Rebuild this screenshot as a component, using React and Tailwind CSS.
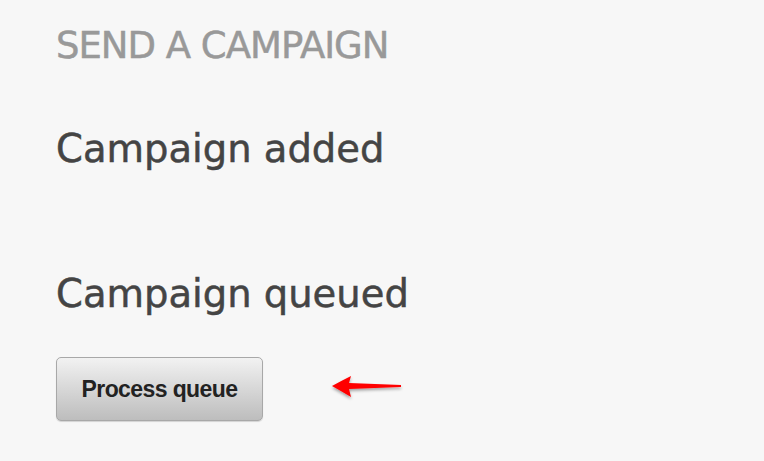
import React from "react";

export default function App() {
  return (
    <div className="w-[764px] h-[461px] bg-[#f7f7f7] overflow-hidden pl-[56px] pt-[24px]" style={{ fontFamily: '"DejaVu Sans", Verdana, sans-serif' }}>
      <h2 className="text-[37px] leading-[44px] text-[#999999] tracking-[-1px] [-webkit-text-stroke:0.5px_#999999]">SEND A CAMPAIGN</h2>
      <h1 className="mt-[58px] text-[38.5px] leading-[46px] text-[#444444] [-webkit-text-stroke:0.5px_#444444]">Campaign added</h1>
      <h1 className="mt-[99px] text-[38.5px] leading-[46px] text-[#444444] [-webkit-text-stroke:0.5px_#444444]">Campaign queued</h1>
      <div className="mt-[40px] flex items-center">
        <button
          className="w-[207px] h-[64px] rounded-[5px] border border-[#a8a8a8] bg-gradient-to-b from-[#f2f2f2] to-[#bdbdbd] text-[23px] font-bold text-[#222] tracking-[-0.6px] shadow-[0_1px_1px_rgba(0,0,0,0.15)]"
          style={{ fontFamily: '"Liberation Sans", Arial, sans-serif' }}
        >
          Process queue
        </button>
        <svg width="80" height="34" viewBox="0 0 80 34" className="ml-[66px] mt-[-5px]">
          <defs>
            <filter id="s" x="-20%" y="-50%" width="140%" height="200%">
              <feDropShadow dx="0" dy="2" stdDeviation="1.5" floodColor="#000" floodOpacity="0.35" />
            </filter>
          </defs>
          <path d="M3 16 Q12 11 22 6 L20 13 L72 15 L72 17 L20 19 L22 27 Q12 21 3 16 Z" fill="#ff0000" filter="url(#s)" />
        </svg>
      </div>
    </div>
  );
}
